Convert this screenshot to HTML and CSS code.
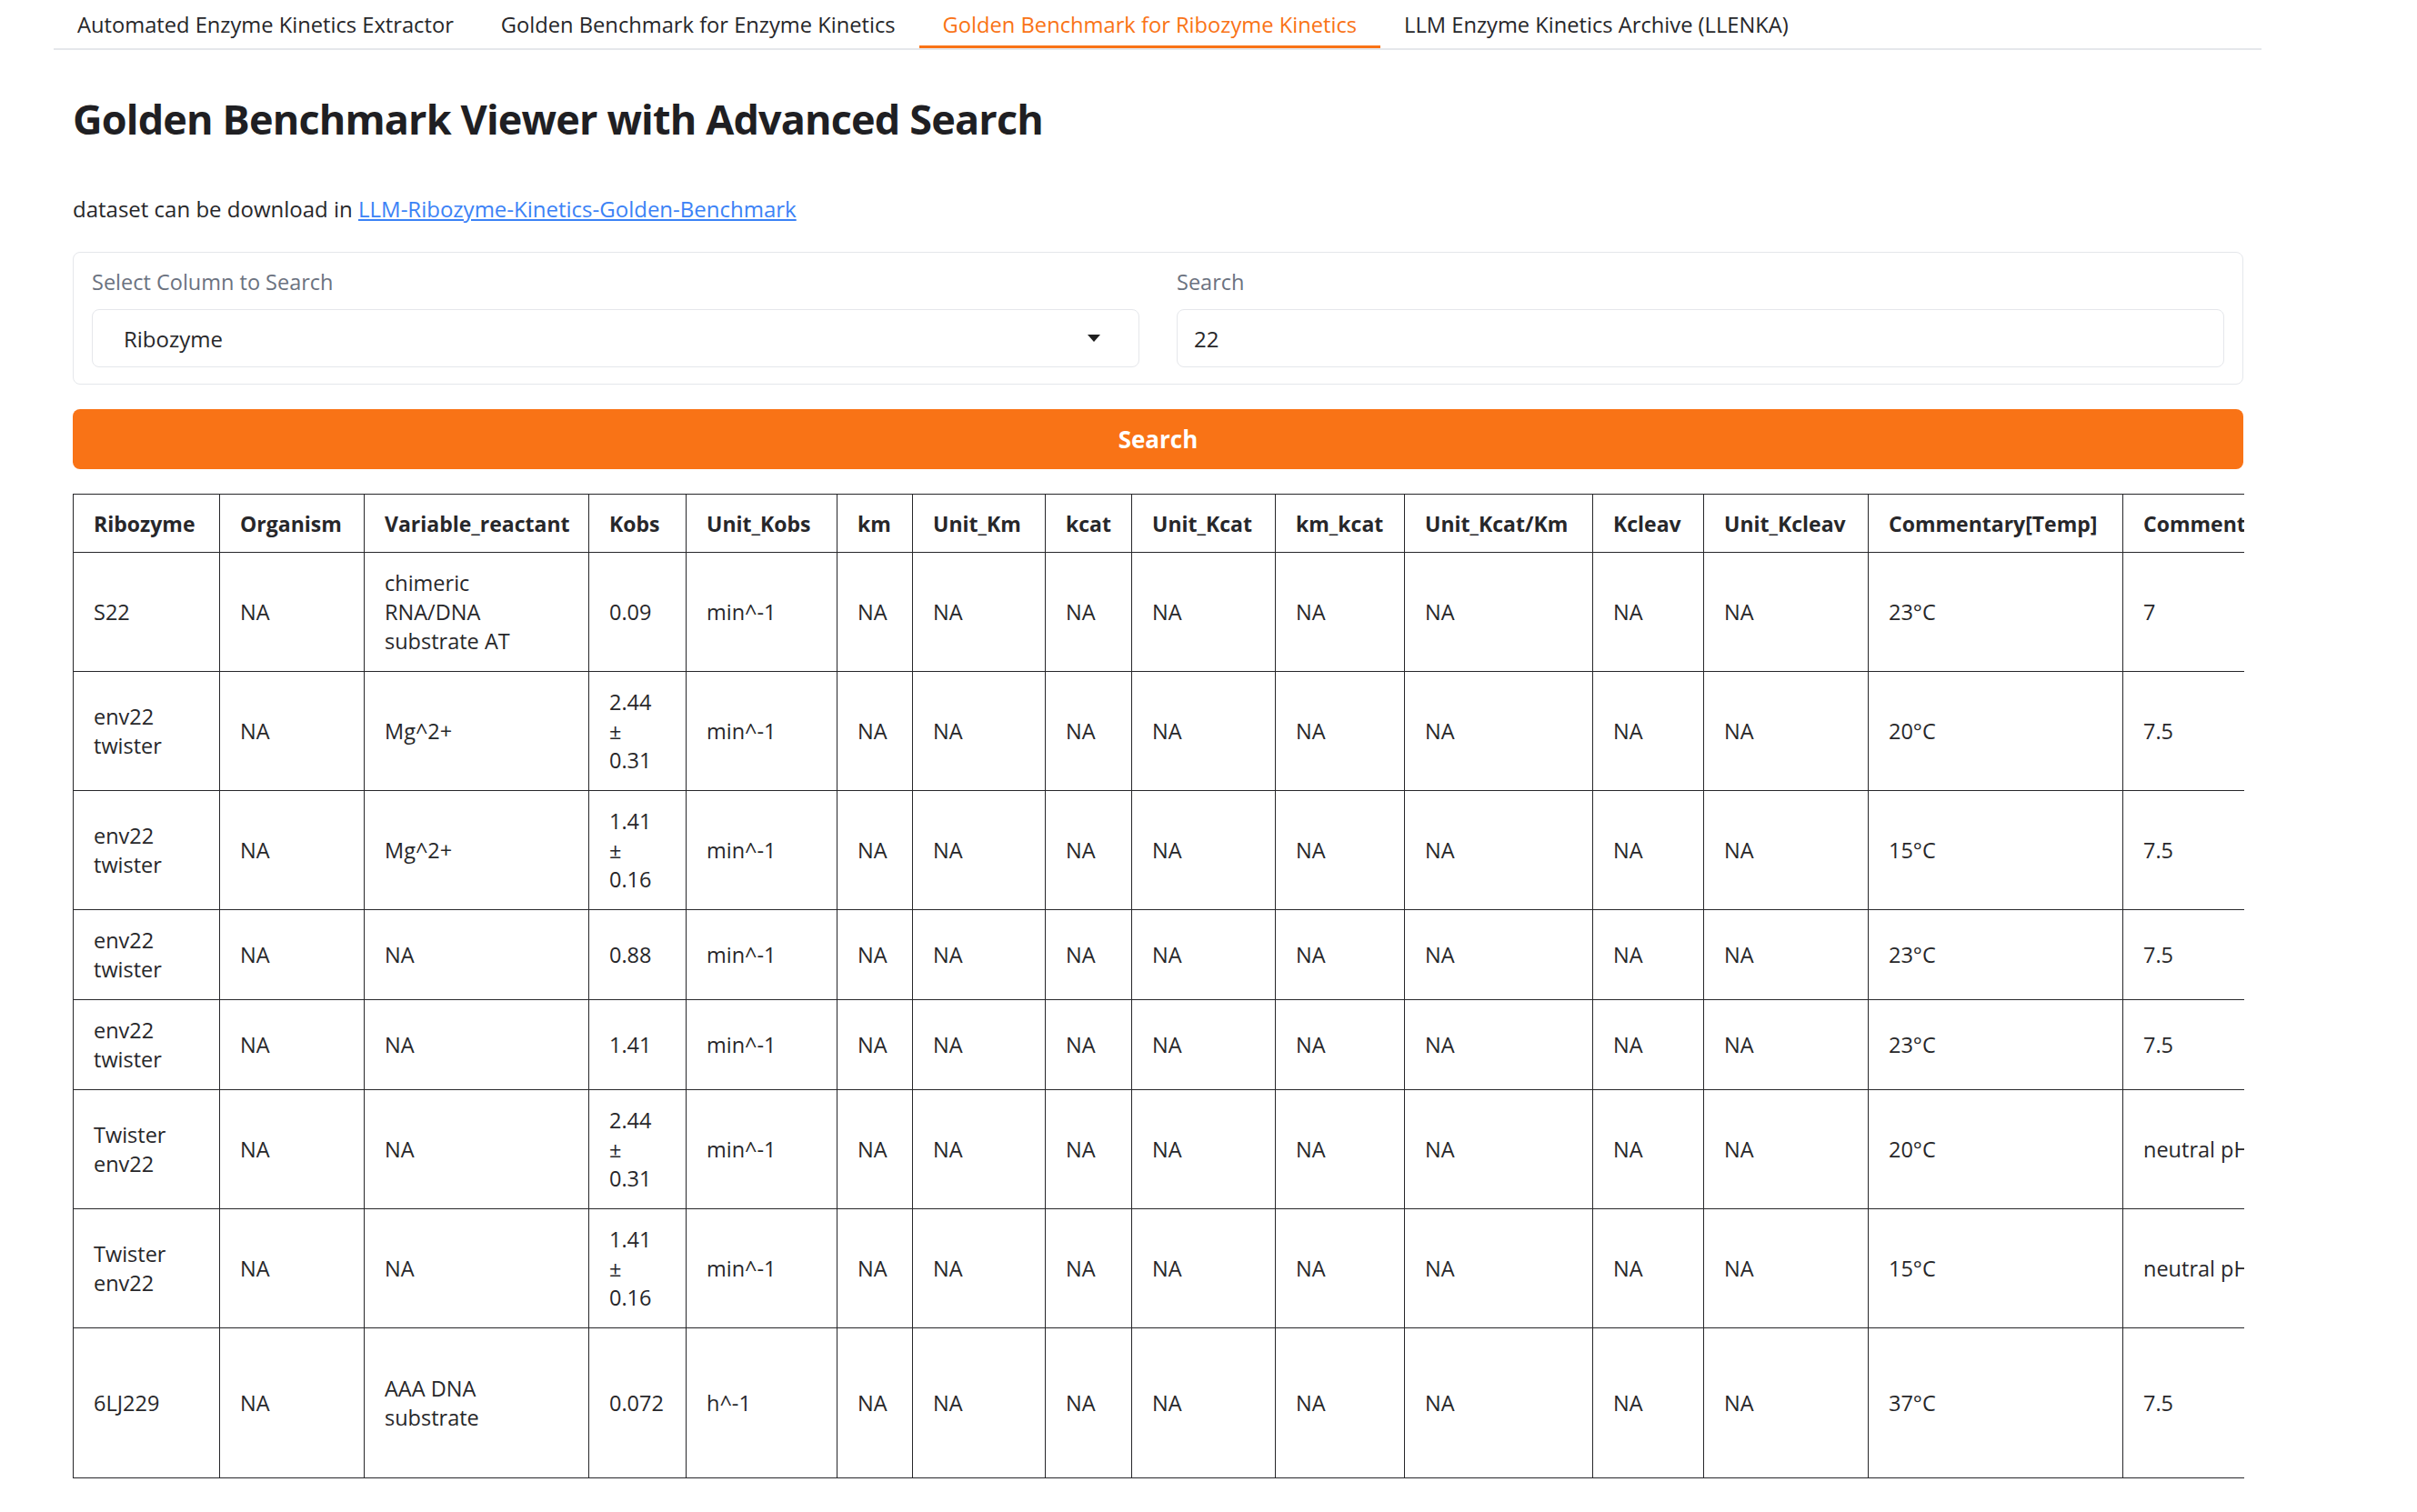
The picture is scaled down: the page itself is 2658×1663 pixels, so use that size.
FILE: index.html
```html
<!DOCTYPE html>
<html lang="en">
<head>
<meta charset="utf-8">
<title>Golden Benchmark Viewer</title>
<link rel="stylesheet" href="styles.css">
</head>
<body>
<div class="app">
  <nav class="tabs">
    <button class="tab">Automated Enzyme Kinetics Extractor</button>
    <button class="tab">Golden Benchmark for Enzyme Kinetics</button>
    <button class="tab active">Golden Benchmark for Ribozyme Kinetics</button>
    <button class="tab">LLM Enzyme Kinetics Archive (LLENKA)</button>
  </nav>
  <main class="content">
    <h1 class="title">Golden Benchmark Viewer with Advanced Search</h1>
    <p class="note">dataset can be download in <a href="#" class="link">LLM-Ribozyme-Kinetics-Golden-Benchmark</a></p>
    <div class="form">
      <div class="field">
        <label class="label">Select Column to Search</label>
        <div class="box select">
          <span>Ribozyme</span>
          <svg class="caret" width="14" height="8" viewBox="0 0 14 8"><polygon points="0,0 14,0 7,8" fill="#1f1f1f"/></svg>
        </div>
      </div>
      <div class="field">
        <label class="label">Search</label>
        <div class="box input"><span>22</span></div>
      </div>
    </div>
    <button class="btn">Search</button>
    <div class="table-wrap">
      <table class="data">
        <colgroup>
          <col class="c1"><col class="c2"><col class="c3"><col class="c4"><col class="c5">
          <col class="c6"><col class="c7"><col class="c8"><col class="c9"><col class="c10">
          <col class="c11"><col class="c12"><col class="c13"><col class="c14"><col class="c15">
        </colgroup>
        <thead>
          <tr>
            <th>Ribozyme</th><th>Organism</th><th>Variable_reactant</th><th>Kobs</th><th>Unit_Kobs</th><th>km</th><th>Unit_Km</th><th>kcat</th><th>Unit_Kcat</th><th>km_kcat</th><th>Unit_Kcat/Km</th><th>Kcleav</th><th>Unit_Kcleav</th><th>Commentary[Temp]</th><th>Commentary[pH]</th>
          </tr>
        </thead>
        <tbody>
          <tr><td>S22</td><td>NA</td><td class="var">chimeric RNA/DNA substrate AT</td><td>0.09</td><td>min^-1</td><td>NA</td><td>NA</td><td>NA</td><td>NA</td><td>NA</td><td>NA</td><td>NA</td><td>NA</td><td>23°C</td><td>7</td></tr>
          <tr><td>env22 twister</td><td>NA</td><td class="var">Mg^2+</td><td>2.44 ± 0.31</td><td>min^-1</td><td>NA</td><td>NA</td><td>NA</td><td>NA</td><td>NA</td><td>NA</td><td>NA</td><td>NA</td><td>20°C</td><td>7.5</td></tr>
          <tr><td>env22 twister</td><td>NA</td><td class="var">Mg^2+</td><td>1.41 ± 0.16</td><td>min^-1</td><td>NA</td><td>NA</td><td>NA</td><td>NA</td><td>NA</td><td>NA</td><td>NA</td><td>NA</td><td>15°C</td><td>7.5</td></tr>
          <tr><td>env22 twister</td><td>NA</td><td class="var">NA</td><td>0.88</td><td>min^-1</td><td>NA</td><td>NA</td><td>NA</td><td>NA</td><td>NA</td><td>NA</td><td>NA</td><td>NA</td><td>23°C</td><td>7.5</td></tr>
          <tr><td>env22 twister</td><td>NA</td><td class="var">NA</td><td>1.41</td><td>min^-1</td><td>NA</td><td>NA</td><td>NA</td><td>NA</td><td>NA</td><td>NA</td><td>NA</td><td>NA</td><td>23°C</td><td>7.5</td></tr>
          <tr><td>Twister env22</td><td>NA</td><td class="var">NA</td><td>2.44 ± 0.31</td><td>min^-1</td><td>NA</td><td>NA</td><td>NA</td><td>NA</td><td>NA</td><td>NA</td><td>NA</td><td>NA</td><td>20°C</td><td>neutral pH</td></tr>
          <tr><td>Twister env22</td><td>NA</td><td class="var">NA</td><td>1.41 ± 0.16</td><td>min^-1</td><td>NA</td><td>NA</td><td>NA</td><td>NA</td><td>NA</td><td>NA</td><td>NA</td><td>NA</td><td>15°C</td><td>neutral pH</td></tr>
          <tr class="tall"><td>6LJ229</td><td>NA</td><td class="var">AAA DNA substrate</td><td>0.072</td><td>h^-1</td><td>NA</td><td>NA</td><td>NA</td><td>NA</td><td>NA</td><td>NA</td><td>NA</td><td>NA</td><td>37°C</td><td>7.5</td></tr>
        </tbody>
      </table>
    </div>
  </main>
</div>
</body>
</html>
```
FILE: styles.css
```css
* { box-sizing: border-box; }
html, body { margin: 0; padding: 0; background: #ffffff; }
body {
  font-family: "Open Sans", "Noto Sans", Arial, sans-serif;
  color: #27272a;
}
.app {
  margin-left: 59px;
  width: 2428px;
}
.tabs {
  display: flex;
  border-bottom: 2px solid #e5e7eb;
  height: 55px;
}
.tab {
  font-family: inherit;
  font-size: 23.7px;
  color: #27272a;
  background: none;
  border: none;
  border-bottom: 3px solid transparent;
  padding: 4px 26px 0;
  height: 53px;
  cursor: pointer;
}
.tab.active {
  color: #f97316;
  border-bottom-color: #f97316;
}
.content {
  padding: 0 20px 0 21px;
}
.title {
  font-size: 45px;
  font-weight: 700;
  letter-spacing: -0.85px;
  line-height: 56px;
  margin: 48px 0 0;
  color: #1f1f23;
}
.note {
  font-size: 24px;
  line-height: 32px;
  margin: 55px 0 0;
}
.link {
  color: #3b82f6;
  text-decoration: underline;
}
.form {
  margin-top: 31px;
  border: 1px solid #e5e7eb;
  border-radius: 8px;
  display: grid;
  grid-template-columns: 1fr 1fr;
  gap: 41px;
  padding: 17px 20px 18px;
}
.field {
  display: flex;
  flex-direction: column;
  gap: 15px;
}
.label {
  font-size: 23.5px;
  line-height: 30px;
  color: #6b7280;
}
.box {
  border: 1px solid #e5e7eb;
  border-radius: 8px;
  height: 64px;
  display: flex;
  align-items: center;
  font-size: 24px;
  color: #27272a;
}
.select {
  padding: 0 42px 0 34px;
  justify-content: space-between;
}
.input {
  padding: 0 18px;
}
.btn {
  display: block;
  width: 100%;
  margin-top: 27px;
  height: 66px;
  border: none;
  border-radius: 8px;
  background: #f97316;
  color: #ffffff;
  font-family: inherit;
  font-size: 26px;
  font-weight: 700;
}
.table-wrap {
  margin-top: 27px;
  overflow: hidden;
  width: 2388px;
}
.data {
  border-collapse: collapse;
  table-layout: fixed;
  width: 2474px;
  font-size: 23.5px;
  line-height: 32px;
}
.data .c1 { width: 161px; }
.data .c2 { width: 159px; }
.data .c3 { width: 247px; }
.data .c4 { width: 107px; }
.data .c5 { width: 166px; }
.data .c6 { width: 83px; }
.data .c7 { width: 146px; }
.data .c8 { width: 95px; }
.data .c9 { width: 158px; }
.data .c10 { width: 142px; }
.data .c11 { width: 207px; }
.data .c12 { width: 122px; }
.data .c13 { width: 181px; }
.data .c14 { width: 280px; }
.data .c15 { width: 220px; }
.data th, .data td {
  border: 1px solid #27272a;
  padding: 17px 22px;
  text-align: left;
  vertical-align: middle;
}
.data td.var {
  padding-right: 28px;
}
.data th {
  font-size: 23px;
  font-weight: 700;
  padding-top: 16px;
  padding-bottom: 15px;
  white-space: nowrap;
  overflow: hidden;
}
.data tr.tall td {
  height: 165px;
}
```
